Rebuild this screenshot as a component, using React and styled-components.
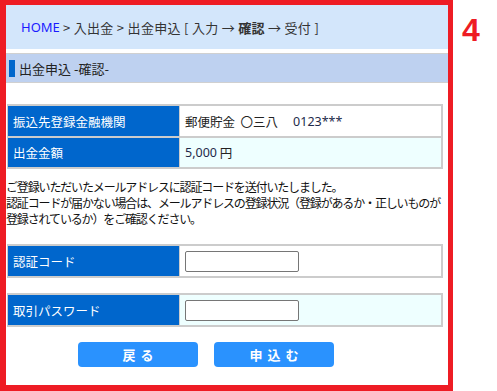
import React from 'react';
import styled, { createGlobalStyle } from 'styled-components';

const GlobalStyle = createGlobalStyle`
  body {
    margin: 0;
    background: #fff;
    font-family: "Noto Sans CJK JP", "Noto Sans", sans-serif;
    color: #222;
  }
`;

const Page = styled.div`
  display: flex;
  align-items: flex-start;
`;

const Frame = styled.div`
  width: 442px;
  border: solid #ee1c24;
  border-width: 5px 5px 6px 6px;
  display: flex;
  flex-direction: column;
`;

const StepNo = styled.div`
  margin: 11px 0 0 9px;
  font-family: "Liberation Sans", Arial, sans-serif;
  font-weight: bold;
  font-size: 32px;
  line-height: 38px;
  color: #ee1c24;
`;

const Crumbs = styled.div`
  height: 44px;
  background: #d3e6fb;
  display: flex;
  align-items: center;
  padding-left: 15px;
  font-size: 13px;
  letter-spacing: 0.3px;
  color: #333;
  white-space: pre;
`;

const Home = styled.span`
  color: #1a1aff;
  font-family: "Noto Sans", sans-serif;
  letter-spacing: 0;
`;

const SectionTitle = styled.div`
  margin-top: 4px;
  height: 28px;
  border-top: 1px solid #d0d0d0;
  border-bottom: 1px solid #d0d0d0;
  background: #bed1f0;
  display: flex;
  align-items: center;
  gap: 4px;
  padding-left: 3px;
  font-size: 13px;
  color: #222;
  &::before {
    content: "";
    width: 6px;
    height: 17px;
    background: #0066cc;
  }
`;

const Table = styled.div`
  margin: ${p => p.$top}px 0 0 1px;
  width: 433px;
  background: #cccccc;
  padding: 2px 2px 2px 1px;
  display: grid;
  grid-template-columns: 171px 1fr;
  gap: 2px 1px;
`;

const Label = styled.div`
  background: #0066cc;
  color: #fff;
  height: ${p => p.$h || 30}px;
  display: flex;
  align-items: center;
  padding-left: 5px;
  font-size: 12.5px;
`;

const Value = styled.div`
  background: ${p => (p.$tint ? '#eeffff' : '#ffffff')};
  height: ${p => p.$h || 30}px;
  display: flex;
  align-items: center;
  padding-left: 5px;
  font-size: 12.5px;
  color: #222;
  white-space: pre;
`;

const Num = styled.span`
  font-family: "Noto Sans", sans-serif;
  color: #1e2a4a;
  margin-left: ${p => p.$gap || 0}px;
`;

const Notice = styled.div`
  margin: 10px 0 0 0;
  display: flex;
  flex-direction: column;
`;

const NoticeLine = styled.div`
  font-size: 12px;
  line-height: 16px;
  height: 16px;
  letter-spacing: -1.15px;
  color: #111;
  white-space: nowrap;
`;

const CodeInput = styled.input`
  box-sizing: border-box;
  width: 114px;
  height: 21px;
  border: 1px solid #767676;
  border-radius: 2px;
  background: #fff;
  padding: 0 3px;
`;

const Buttons = styled.div`
  display: flex;
  gap: 16px;
  margin: 15px 0 18px 72px;
`;

const Btn = styled.button`
  width: 120px;
  height: 25px;
  border: none;
  border-radius: 4px;
  background: #2a92fe;
  color: #fff;
  font-family: "Noto Sans CJK JP", sans-serif;
  font-weight: bold;
  font-size: 13px;
  letter-spacing: 5px;
  padding: 0 0 0 5px;
  cursor: pointer;
`;

const notice = [
  'ご登録いただいたメールアドレスに認証コードを送付いたしました。',
  '認証コードが届かない場合は、メールアドレスの登録状況（登録があるか・正しいものが',
  '登録されているか）をご確認ください。',
];

export default function App() {
  return (
    <Page>
      <GlobalStyle />
      <Frame>
        <Crumbs>
          <Home>HOME</Home>{' > 入出金 > 出金申込 [ 入力 → '}<b>確認</b>{' → 受付 ]'}
        </Crumbs>
        <SectionTitle>出金申込 -確認-</SectionTitle>

        <Table $top={21}>
          <Label>振込先登録金融機関</Label>
          <Value>{'郵便貯金  〇三八'}<Num $gap={15}>0123***</Num></Value>
          <Label $h={29}>出金金額</Label>
          <Value $h={29} $tint><Num>5,000</Num> 円</Value>
        </Table>

        <Notice>
          {notice.map(line => (
            <NoticeLine key={line}>{line}</NoticeLine>
          ))}
        </Notice>

        <Table $top={17}>
          <Label>認証コード</Label>
          <Value><CodeInput type="text" /></Value>
        </Table>

        <Table $top={15}>
          <Label>取引パスワード</Label>
          <Value $tint><CodeInput type="password" /></Value>
        </Table>

        <Buttons>
          <Btn>戻る</Btn>
          <Btn>申込む</Btn>
        </Buttons>
      </Frame>
      <StepNo>4</StepNo>
    </Page>
  );
}
